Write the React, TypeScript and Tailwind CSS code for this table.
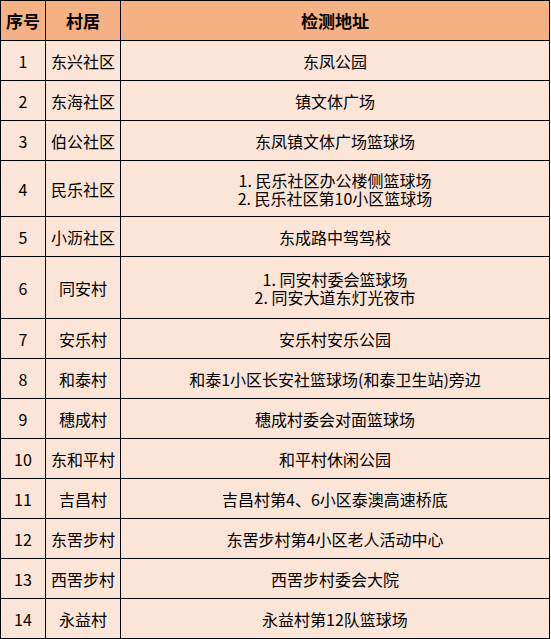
const rows: { no: number; village: string; address: string[]; h: string }[] = [
  { no: 1, village: '东兴社区', address: ['东凤公园'], h: 'h-[40px]' },
  { no: 2, village: '东海社区', address: ['镇文体广场'], h: 'h-[40px]' },
  { no: 3, village: '伯公社区', address: ['东凤镇文体广场篮球场'], h: 'h-[40px]' },
  { no: 4, village: '民乐社区', address: ['1. 民乐社区办公楼侧篮球场', '2. 民乐社区第10小区篮球场'], h: 'h-[56px]' },
  { no: 5, village: '小沥社区', address: ['东成路中驾驾校'], h: 'h-[40px]' },
  { no: 6, village: '同安村', address: ['1. 同安村委会篮球场', '2. 同安大道东灯光夜市'], h: 'h-[62px]' },
  { no: 7, village: '安乐村', address: ['安乐村安乐公园'], h: 'h-[40px]' },
  { no: 8, village: '和泰村', address: ['和泰1小区长安社篮球场(和泰卫生站)旁边'], h: 'h-[40px]' },
  { no: 9, village: '穗成村', address: ['穗成村委会对面篮球场'], h: 'h-[40px]' },
  { no: 10, village: '东和平村', address: ['和平村休闲公园'], h: 'h-[40px]' },
  { no: 11, village: '吉昌村', address: ['吉昌村第4、6小区泰澳高速桥底'], h: 'h-[40px]' },
  { no: 12, village: '东罟步村', address: ['东罟步村第4小区老人活动中心'], h: 'h-[40px]' },
  { no: 13, village: '西罟步村', address: ['西罟步村委会大院'], h: 'h-[40px]' },
  { no: 14, village: '永益村', address: ['永益村第12队篮球场'], h: 'h-[40px]' },
];

const cell = 'border border-black text-center align-middle p-0';

export default function App() {
  return (
    <div
      className="w-[551px] bg-white text-black"
      style={{ fontFamily: '"SimSun", "Noto Sans CJK SC", sans-serif' }}
    >
      <table className="w-[550px] table-fixed border-collapse text-[16px] leading-[18px]">
        <colgroup>
          <col className="w-[45px]" />
          <col className="w-[75px]" />
          <col />
        </colgroup>
        <thead>
          <tr className="h-[40px] bg-[#f4b183]">
            <th className={`${cell} font-bold text-[17px]`}>序号</th>
            <th className={`${cell} font-bold text-[17px]`}>村居</th>
            <th className={`${cell} font-bold text-[17px]`}>检测地址</th>
          </tr>
        </thead>
        <tbody>
          {rows.map((r) => (
            <tr key={r.no} className={`${r.h} bg-[#fce4d6]`}>
              <td className={cell}>{r.no}</td>
              <td className={`${cell} whitespace-nowrap`}>{r.village}</td>
              <td className={cell}>
                {r.address.map((line) => (
                  <div key={line}>{line}</div>
                ))}
              </td>
            </tr>
          ))}
        </tbody>
      </table>
    </div>
  );
}
